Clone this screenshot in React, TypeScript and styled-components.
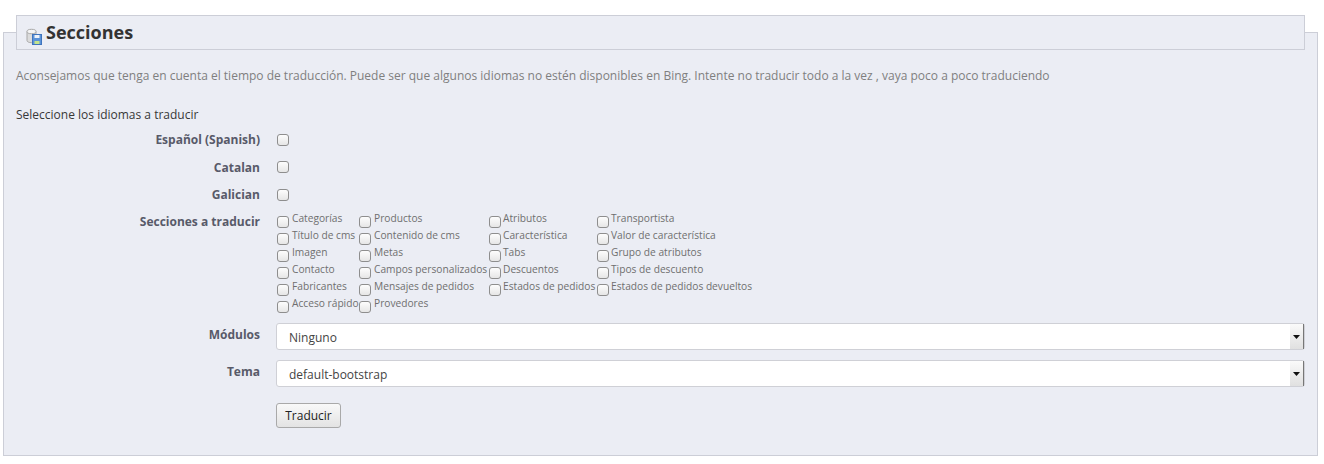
import styled, { createGlobalStyle } from "styled-components";

const LANGUAGES = ["Español (Spanish)", "Catalan", "Galician"];

const SECTIONS = [
  ["Categorías", "Productos", "Atributos", "Transportista"],
  ["Título de cms", "Contenido de cms", "Característica", "Valor de característica"],
  ["Imagen", "Metas", "Tabs", "Grupo de atributos"],
  ["Contacto", "Campos personalizados", "Descuentos", "Tipos de descuento"],
  ["Fabricantes", "Mensajes de pedidos", "Estados de pedidos", "Estados de pedidos devueltos"],
  ["Acceso rápido", "Provedores"],
];

function SectionIcon() {
  return (
    <StIcon width="16" height="17" viewBox="0 0 16 17">
      <path
        d="M1 3.5v9c0 1.3 2 2.2 4.5 2.2s4.500-.9 4.500-2.200v-9"
        fill="#dcdcdc"
        stroke="#a8a8a8"
      />
      <ellipse cx="5.500" cy="3.500" rx="4.500" ry="2.200" fill="#f4f4f4" stroke="#a8a8a8" />
      <rect x="6.500" y="6.500" width="9" height="10" fill="#5b93d8" stroke="#3f74bd" />
      <rect x="8.500" y="7" width="5" height="3" fill="#eef3fa" />
      <rect x="8.500" y="13" width="5" height="3" fill="#c4e48a" />
    </StIcon>
  );
}

function Select({ value }: { value: string }) {
  return (
    <StSelect>
      <span>{value}</span>
      <StSelectArrow>
        <svg width="7" height="4" viewBox="0 0 7 4">
          <path d="M0 0h7L3.500 4z" fill="#111" />
        </svg>
      </StSelectArrow>
    </StSelect>
  );
}

export default function App() {
  return (
    <>
      <GlobalStyle />
      <StPanel>
        <StHeader>
          <SectionIcon />
          <h3>Secciones</h3>
        </StHeader>
        <StAdvice>
          Aconsejamos que tenga en cuenta el tiempo de traducción. Puede ser que algunos idiomas no
          estén disponibles en Bing. Intente no traducir todo a la vez , vaya poco a poco traduciendo
        </StAdvice>
        <StIntro>Seleccione los idiomas a traducir</StIntro>
        {LANGUAGES.map((language) => (
          <StRow key={language}>
            <StLabel>{language}</StLabel>
            <StCheck type="checkbox" />
          </StRow>
        ))}
        <StSectionsRow>
          <StLabel>Secciones a traducir</StLabel>
          <StGrid>
            {SECTIONS.flat().map((section) => (
              <StOption key={section}>
                <StGridCheck type="checkbox" />
                <span>{section}</span>
              </StOption>
            ))}
          </StGrid>
        </StSectionsRow>
        <StSelectRow>
          <StLabel>Módulos</StLabel>
          <Select value="Ninguno" />
        </StSelectRow>
        <StSelectRow>
          <StLabel>Tema</StLabel>
          <Select value="default-bootstrap" />
        </StSelectRow>
        <StButton>Traducir</StButton>
      </StPanel>
    </>
  );
}

const GlobalStyle = createGlobalStyle`
  body {
    margin: 0;
    background: #fff;
    font-family: "Open Sans", "Liberation Sans", sans-serif;
    color: #585a69;
  }
`;

const StPanel = styled.section`
  box-sizing: border-box;
  width: 1315px;
  height: 424px;
  margin: 32px 0 0 3px;
  padding: 0 12px;
  background: #ebedf4;
  border: 1px solid #ccced7;
`;

const StHeader = styled.header`
  box-sizing: border-box;
  display: flex;
  align-items: center;
  height: 35px;
  margin-top: -18px;
  padding-left: 9px;
  background: #ebedf4;
  border: 1px solid #ccced7;

  h3 {
    margin: 0 0 2px 4px;
    font-size: 18px;
    line-height: 24px;
    font-weight: 700;
    color: #333;
  }
`;

const StIcon = styled.svg`
  margin-top: 7px;
  flex: none;
`;

const StAdvice = styled.p`
  margin: 17px 0 0;
  font-size: 12px;
  line-height: 18px;
  color: #7f7f7f;
`;

const StIntro = styled.p`
  margin: 21px 0 2.7px;
  font-size: 12px;
  line-height: 18px;
  color: #383838;
`;

const StRow = styled.div`
  display: flex;
  align-items: center;
  height: 27.4px;
`;

const StLabel = styled.label`
  flex: none;
  width: 244px;
  font-size: 12px;
  line-height: 18px;
  font-weight: 700;
  text-align: right;
  color: #585a69;
`;

const StCheck = styled.input`
  appearance: none;
  box-sizing: border-box;
  flex: none;
  width: 12px;
  height: 12px;
  margin: -1px 0 0 17px;
  background: linear-gradient(#fdfdfd, #e6e6e6);
  border: 1px solid #8e8e8e;
  border-radius: 3px;
`;

const StSectionsRow = styled.div`
  display: flex;
  align-items: flex-start;
  padding-top: 4.3px;
  margin-bottom: 10px;
`;

const StGrid = styled.div`
  display: grid;
  grid-template-columns: 82px 130px 108px auto;
  grid-auto-rows: 17px;
  margin: -2px 0 0 17px;
`;

const StOption = styled.div`
  display: flex;
  align-items: flex-start;
  font-size: 10.2px;
  line-height: 14px;
  white-space: nowrap;
  color: #6f6f6f;

  &:nth-child(4n + 1),
  &:nth-child(4n + 2) {
    gap: 1px;
  }
`;

const StGridCheck = styled(StCheck)`
  margin: 4.5px 2px 0 0;
`;

const StSelectRow = styled.div`
  display: flex;
  align-items: flex-start;
  height: 37px;

  ${StLabel} {
    margin-top: 3px;
  }
`;

const StSelect = styled.div`
  box-sizing: border-box;
  position: relative;
  display: flex;
  align-items: center;
  width: 1029px;
  height: 27px;
  margin-left: 16px;
  padding: 1px 0 0 12px;
  background: #fff;
  border: 1px solid #cfd0d6;
  border-radius: 3px;
  font-size: 12px;
  color: #444;
`;

const StSelectArrow = styled.span`
  position: absolute;
  top: 0;
  right: 0;
  bottom: 0;
  box-sizing: border-box;
  width: 14px;
  padding-right: 1px;
  display: flex;
  align-items: center;
  justify-content: center;
  background: linear-gradient(#fafafa, #e0e0e0);
  border-right: 1px solid #777;
`;

const StButton = styled.button`
  display: block;
  box-sizing: border-box;
  width: 65px;
  height: 25px;
  margin: 6px 0 0 260px;
  padding: 0;
  background: linear-gradient(#f9f9f9, #e3e3e3);
  border: 1px solid #a9a9a9;
  border-radius: 3px;
  font-family: inherit;
  font-size: 12px;
  color: #222;
`;
